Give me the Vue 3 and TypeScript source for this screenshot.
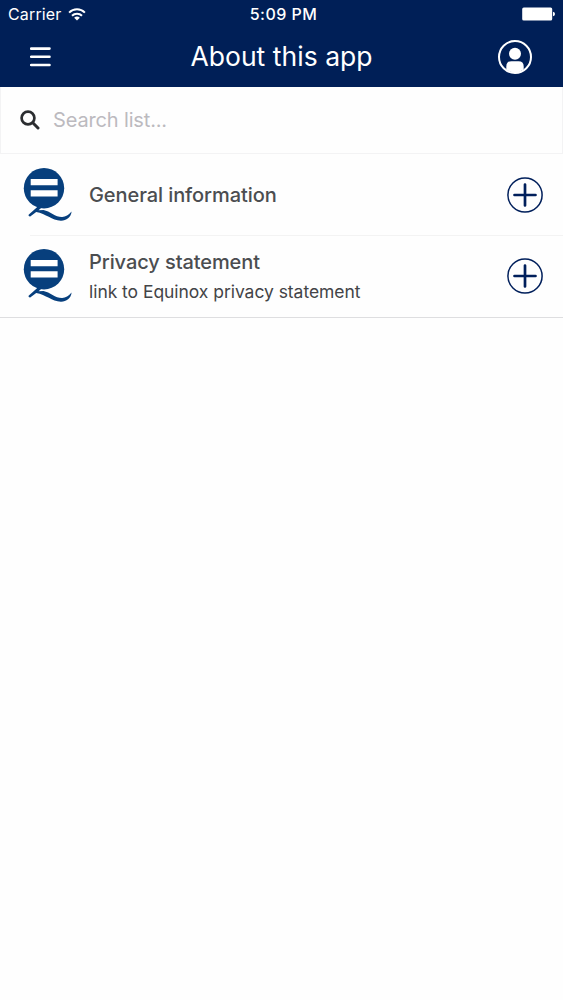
<script setup lang="ts">
import { ref, computed } from "vue";

interface ListItem {
  title: string;
  desc?: string;
}

const items: ListItem[] = [
  { title: "General information" },
  { title: "Privacy statement", desc: "link to Equinox privacy statement" },
];

const search = ref<string>("");

const visibleItems = computed<ListItem[]>(() => {
  const term = search.value.trim().toLowerCase();
  return items.filter((item) => item.title.toLowerCase().includes(term));
});
</script>

<template>
  <div class="screen">
    <header class="header">
      <div class="status">
        <div class="carrier">
          <span class="carrier-name">Carrier</span>
          <svg class="wifi" width="18" height="13" viewBox="0 0 18 13">
            <g fill="none" stroke="#fff" stroke-width="2">
              <path d="M1.1 4.6C5.5 0.2 12.5 0.2 16.9 4.6" />
              <path d="M4 7.8C6.8 5 11.2 5 14 7.8" />
            </g>
            <path d="M9 12.6L6.1 9.7Q9 7.4 11.9 9.7Z" fill="#fff" />
          </svg>
        </div>
        <span class="time">5:09 PM</span>
        <svg class="battery" width="34" height="14" viewBox="0 0 34 14">
          <rect x="1.2" y="0.5" width="30" height="13" rx="1.6" fill="#fff" />
          <path d="M32 4.7Q34 5.2 34 7T32 9.3Z" fill="#fff" />
        </svg>
      </div>
      <div class="navbar">
        <button class="icon-button" aria-label="Menu">
          <svg width="22" height="20" viewBox="0 0 22 20">
            <path
              d="M1.1 1.6H19.5M1.1 9.8H19.5M1.1 18H19.5"
              stroke="#fff"
              stroke-width="2.6"
              stroke-linecap="round"
            />
          </svg>
        </button>
        <h1 class="title">About this app</h1>
        <button class="icon-button" aria-label="Account">
          <svg width="36" height="36" viewBox="0 0 36 36">
            <circle cx="18" cy="18" r="16" fill="none" stroke="#fff" stroke-width="2" />
            <circle cx="18" cy="14.7" r="6" fill="#fff" />
            <path
              d="M9.3 30.5V27.5Q9.3 22.2 14.5 22.2H21.5Q26.7 22.2 26.7 27.5V30.5Q18 36.5 9.3 30.5Z"
              fill="#fff"
            />
          </svg>
        </button>
      </div>
    </header>

    <label class="search">
      <svg width="20" height="20" viewBox="0 0 20 20" fill="none" stroke="#2b2d30">
        <circle cx="8" cy="8" r="6.4" stroke-width="2.7" />
        <path d="M12.8 12.8L18 18" stroke-width="3" stroke-linecap="round" />
      </svg>
      <input v-model="search" class="search-input" type="text" placeholder="Search list..." />
    </label>

    <ul class="list">
      <li v-for="item in visibleItems" :key="item.title" class="item">
        <svg class="logo" width="50" height="54" viewBox="0 0 50 54">
          <circle cx="21" cy="20.2" r="20.2" fill="#073f7d" />
          <path d="M7.7 11H34.6V17.3H7.7ZM7.7 22.2H34.6V28.4H7.7Z" fill="#fff" />
          <path
            d="M14.8 38.5L18.4 39.8L15.6 42.2L20.5 42C27 43.2 32.5 49.3 39.2 49.1Q44.2 48.8 48.6 43.6C48 49.6 43 53 37.8 52.8C29 52.4 23 45.8 13.2 44.1L7.2 48.5Q5 48.6 5.6 46.7Z"
            fill="#073f7d"
          />
        </svg>
        <div class="text">
          <h2 class="item-title">{{ item.title }}</h2>
          <p v-if="item.desc" class="item-desc">{{ item.desc }}</p>
        </div>
        <svg class="plus" width="36" height="36" viewBox="0 0 36 36" fill="none" stroke="#001f5b">
          <circle cx="18" cy="18" r="17.1" stroke-width="1.5" />
          <path d="M18 7.5V28.5M7.5 18H28.5" stroke-width="2.7" stroke-linecap="round" />
        </svg>
      </li>
    </ul>
  </div>
</template>

<style>
body {
  margin: 0;
  background-color: #fefefe;
}
</style>

<style scoped>
.screen {
  min-height: 1000px;
  background-color: #fefefe;
  font-family: Inter, "Liberation Sans", sans-serif;
}
.header {
  height: 87px;
  background-color: #001f57;
  color: white;
}
.status {
  display: grid;
  grid-template-columns: 1fr auto 1fr;
  align-items: center;
  height: 28px;
  padding: 0 8px;
  font-size: 16px;
  line-height: 28px;
}
.carrier {
  display: flex;
  align-items: center;
  gap: 6px;
}
.carrier-name {
  letter-spacing: 0.15px;
}
.time {
  position: relative;
  left: 2px;
  font-weight: 500;
  letter-spacing: 0.45px;
}
.battery {
  justify-self: end;
}
.navbar {
  display: flex;
  align-items: center;
  justify-content: space-between;
  height: 58px;
  padding: 0 30px;
}
.icon-button {
  display: flex;
  width: 36px;
  padding: 0;
  border: none;
  background: none;
  cursor: pointer;
}
.title {
  margin: 0 0 3px;
  font-size: 26.5px;
  font-weight: 430;
  line-height: 32px;
  letter-spacing: 0.03px;
}

.search {
  display: flex;
  align-items: center;
  box-sizing: border-box;
  height: 67px;
  padding: 0 19px;
  gap: 13px;
  border: 1px solid #f3f3f4;
  border-top: none;
}
.search-input {
  flex: 1;
  padding: 0;
  border: none;
  outline: none;
  background: none;
  color: #444649;
  font: 400 20px/28px Inter, "Liberation Sans", sans-serif;
  letter-spacing: -0.15px;
}
.search-input::placeholder {
  color: #bcbabf;
  opacity: 1;
}

.list {
  margin: 0;
  padding: 0;
  list-style: none;
  border-bottom: 1px solid #dedee0;
}
.item {
  display: flex;
  align-items: center;
  position: relative;
  height: 81px;
  padding: 0 20px 0 23px;
}
.item + .item {
  border-bottom: 1px solid transparent;
}
/* inset separator between rows */
.item + .item::before {
  content: "";
  position: absolute;
  top: 0;
  left: 30px;
  right: 0;
  height: 1px;
  background-color: #f3f3f3;
}
.text {
  flex: 1;
  margin-left: 16px;
}
.item-title {
  margin: 0;
  color: #4b4d50;
  font-size: 20px;
  font-weight: 500;
  line-height: 28px;
  letter-spacing: -0.08px;
}
.item-desc {
  margin: 1px 0 -3px;
  color: #434447;
  font-size: 17.5px;
  line-height: 30px;
  letter-spacing: -0.05px;
}
</style>
